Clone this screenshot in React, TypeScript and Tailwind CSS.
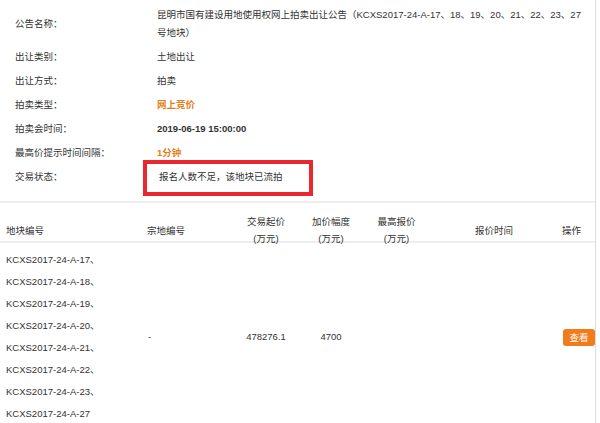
import React from 'react';

const font = { fontFamily: '"Liberation Sans", "Noto Sans CJK SC", sans-serif' };

const infoRows: { label: string; value: React.ReactNode; tone?: 'orange' | 'bold' }[] = [
    { label: '出让类别：', value: '土地出让' },
    { label: '出让方式：', value: '拍卖' },
    { label: '拍卖类型：', value: '网上竞价', tone: 'orange' },
    { label: '拍卖会时间：', value: '2019-06-19 15:00:00', tone: 'bold' },
    { label: '最高价提示时间间隔：', value: '1分钟', tone: 'orange' },
];

const parcels = ['17', '18', '19', '20', '21', '22', '23', '27'];

const cols = 'grid grid-cols-[140px_95px_62px_68px_63px_132px_36px]';

const InfoSection: React.FC = () => (
    <div className="pt-[3px] pb-[12px] border-b-2 border-[#eeeeee]">
        <div className="flex items-center py-[3px] leading-[18px]">
            <div className="w-[157px] pl-[15px] shrink-0">公告名称：</div>
            <div className="flex-1">
                昆明市国有建设用地使用权网上拍卖出让公告（KCXS2017-24-A-17、18、19、20、21、22、23、27
                <br />
                号地块）
            </div>
        </div>
        {infoRows.map(row => (
            <div key={row.label} className="flex h-[24px] items-center">
                <div className="w-[157px] pl-[15px] shrink-0">{row.label}</div>
                <div
                    className={
                        row.tone === 'orange'
                            ? 'font-bold text-[#e57d1c]'
                            : row.tone === 'bold'
                            ? 'font-bold text-[#333]'
                            : ''
                    }
                >
                    {row.value}
                </div>
            </div>
        ))}
        <div className="flex h-[24px] items-center">
            <div className="w-[157px] pl-[15px] shrink-0">交易状态：</div>
            <div className="relative h-full flex items-center pl-[2px]">
                报名人数不足，该地块已流拍
                {/* red annotation box */}
                <div className="absolute left-[-14px] top-[-5px] w-[170px] h-[36px] border-4 border-[#e8282e]"></div>
            </div>
        </div>
    </div>
);

const AuctionTable: React.FC = () => (
    <div>
        <div className={`${cols} h-[40px] pt-[10px] items-center border-b-2 border-[#eeeeee] leading-[17px]`}>
            <div className="pl-[6px]">地块编号</div>
            <div className="pl-[7px]">宗地编号</div>
            <div className="text-center">交易起价<br />(万元)</div>
            <div className="text-center">加价幅度<br />(万元)</div>
            <div className="text-center">最高报价<br />(万元)</div>
            <div className="text-center">报价时间</div>
            <div className="pl-[2px]">操作</div>
        </div>
        <div className={`${cols} items-center pt-[6px]`}>
            <div className="pl-[6px] leading-[22px]">
                {parcels.map((p, i) => (
                    <div key={p}>
                        KCXS2017-24-A-{p}
                        {i < parcels.length - 1 ? '、' : ''}
                    </div>
                ))}
            </div>
            <div className="pl-[8px]">-</div>
            <div className="text-center">478276.1</div>
            <div className="text-center">4700</div>
            <div></div>
            <div></div>
            <div className="pl-[3px]">
                <button className="w-[32px] h-[17px] rounded-[3px] bg-[#f27b1c] text-white text-[9.5px] leading-[17px]">
                    查看
                </button>
            </div>
        </div>
    </div>
);

export default function App() {
    return (
        <div className="w-[600px] h-[423px] overflow-hidden bg-white" style={font}>
            <div className="w-[596px] min-h-[423px] border-r border-[#dddddd] text-[9.5px] text-[#333]">
                <InfoSection />
                <AuctionTable />
            </div>
        </div>
    );
}
